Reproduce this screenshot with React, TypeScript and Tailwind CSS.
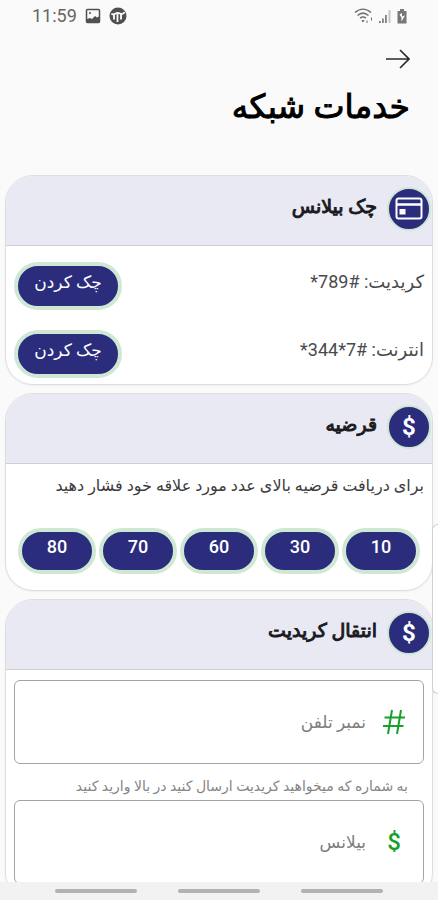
import type { ReactNode } from "react";

function Card({ title, icon, children }: { title: string; icon: ReactNode; children: ReactNode }) {
  return (
    <section className="overflow-hidden rounded-[28px] border border-[#dededf] bg-white shadow-xs">
      <header className="flex h-[70px] items-start gap-[10px] border-b border-[#cfcfd6] bg-[#e8e9f2] px-px pt-[11px]">
        <span className="flex size-11 shrink-0 items-center justify-center rounded-full border-2 border-[#cde6d3] bg-[#2b2c7c] text-2xl font-bold text-white">
          {icon}
        </span>
        <h2 className="pt-[6px] text-[19px] leading-7 font-medium text-[#1b1b1f] [-webkit-text-stroke:1px_currentColor]">
          {title}
        </h2>
      </header>
      {children}
    </section>
  );
}

function CardIcon() {
  return (
    <svg viewBox="0 0 28 24" className="h-6 w-7" fill="none" stroke="white" strokeWidth="2">
      <rect x="1.5" y="1.5" width="25" height="20" rx="2" />
      <path d="M2 7.500h24" strokeWidth="2.500" />
      <rect x="4.500" y="12" width="6" height="5.500" fill="white" stroke="none" />
    </svg>
  );
}

function CheckRow({ text }: { text: string }) {
  return (
    <div className="flex h-12 items-center justify-between">
      <p className="pb-2 text-lg leading-6 text-[#4a4a4c]">{text}</p>
      <button
        type="button"
        className="h-12 w-[108px] rounded-full border-4 border-[#cfe8d4] bg-[#2b2c7c] pb-2 text-[17px] leading-6 font-medium text-white"
      >
        چک کردن
      </button>
    </div>
  );
}

function Field({ id, label, icon }: { id: string; label: string; icon: ReactNode }) {
  return (
    <div className="flex h-[84px] items-center gap-4 rounded-md border border-[#a3a3a3] px-[17px] pb-px">
      <label htmlFor={id} className="flex w-6 shrink-0 justify-center text-2xl font-medium text-[#17a02b]">
        {icon}
      </label>
      <input
        id={id}
        type="text"
        aria-label={label}
        placeholder={label}
        className="h-10 min-w-0 flex-1 bg-transparent text-[17px] text-[#444444] outline-none placeholder:text-[#7d7d7d]"
      />
    </div>
  );
}

const amounts = [10, 30, 60, 70, 80];

export default function App() {
  return (
    <div
      dir="rtl"
      className="relative flex h-screen flex-col overflow-hidden bg-[#fafafa] font-[Roboto,'DejaVu_Sans',sans-serif]"
    >
      <div dir="ltr" className="flex h-8 shrink-0 items-center justify-between pr-[30px] pl-8 text-[#666666]">
        <div className="flex items-center gap-2">
          <span className="text-lg leading-6">11:59</span>
          <svg viewBox="0 0 16 16" className="size-4">
            <rect x="1.5" y="1.5" width="13" height="13" rx="1" fill="none" stroke="#505050" strokeWidth="1.5" />
            <path d="M2 14v-3l3-1 2 1 3-3 2 1.500 2-1V14z" fill="#505050" />
            <circle cx="5" cy="5" r="1" fill="#505050" />
          </svg>
          <svg viewBox="0 0 18 18" className="size-[18px]">
            <circle cx="9" cy="9" r="8.5" fill="#505050" />
            <path
              d="M2.500 6.500c1 1.500 2.500 1 4 0M6.500 6.500c1.500-1 3.500-.5 4.500 0s3.500 1 4.500-1.500M5 8v4.500M8.500 7v8M12 7.500v5"
              fill="none"
              stroke="white"
              strokeWidth="1.800"
            />
          </svg>
        </div>
        <div className="flex items-center gap-1">
          <svg viewBox="0 0 20 16" className="h-4 w-5" fill="none" stroke="#707070" strokeWidth="1.500">
            <path d="M1 4.500c5-4.500 11-4.500 16 0M3.500 7.500c3.500-3 7.500-3 11 0M6 10.200c2-1.500 4-1.500 6 0" />
            <path d="M8 12.500h2l-1 1.500zM13 12.500v2.500M17.500 9.500v3" strokeWidth="1" />
          </svg>
          <svg viewBox="0 0 14 16" className="h-4 w-3.5" fill="#808080">
            <path d="M1 13h1.800v2H1zM4 10.500h1.800V15H4zM7 7h1.800v8H7z" />
            <path d="M10.500 2h2v13h-2z" fill="#c8c8c8" />
          </svg>
          <svg viewBox="0 0 12 16" className="h-4 w-3">
            <path d="M4 1h4v2h2.500v12.500h-9V3H4z" fill="#777777" />
            <path d="M3.500 6.500 6 5v3.500l3-1-3.500 6V9.500z" fill="white" />
          </svg>
        </div>
      </div>

      <header className="flex shrink-0 flex-col items-start px-7 pt-[11px]">
        <button type="button" aria-label="بازگشت" className="flex h-8 w-6 items-center justify-center">
          <svg viewBox="0 0 24 20" className="h-5 w-6" fill="none" stroke="#2a2a2a" strokeWidth="1.600">
            <path d="M0 10h23M14 1l9 9-9 9" />
          </svg>
        </button>
        <h1 className="pt-3 text-[33px] leading-10 font-medium text-black [-webkit-text-stroke:1px_currentColor]">
          خدمات شبکه
        </h1>
      </header>

      <main className="mt-12 flex min-h-0 flex-1 flex-col gap-2 overflow-hidden px-[5px] *:shrink-0">
        <Card title="چک بیلانس" icon={<CardIcon />}>
          <div className="flex flex-col gap-5 px-2 pt-4 pb-[6px]">
            <CheckRow text="کریدیت: #789*" />
            <CheckRow text="انترنت: #7*344*" />
          </div>
        </Card>

        <Card title="قرضیه" icon="$">
          <div className="px-2 pt-[10px] pb-4">
            <p className="text-base leading-6 text-[#3c3c3e]">برای دریافت قرضیه بالای عدد مورد علاقه خود فشار دهید</p>
            <div className="mt-[30px] flex gap-[3px] px-1">
              {amounts.map((amount) => (
                <button
                  key={amount}
                  type="button"
                  className="h-[46px] flex-1 rounded-full border-4 border-[#cfe8d4] bg-[#2b2c7c] pb-2 text-lg leading-6 font-medium text-white"
                >
                  {amount}
                </button>
              ))}
            </div>
          </div>
        </Card>

        <Card title="انتقال کریدیت" icon="$">
          <form className="px-2 pt-[10px] pb-4">
            <Field
              id="phone"
              label="نمبر تلفن"
              icon={
                <svg viewBox="0 0 24 26" className="h-[26px] w-6" fill="none" stroke="#17a02b" strokeWidth="2">
                  <path d="M10 1 6 25M19 1l-4 24M2.500 8.500H23M1 17h20.500" />
                </svg>
              }
            />
            <p className="px-4 pt-[10px] pb-[2px] text-sm leading-6 text-[#858585]">
              به شماره که میخواهید کریدیت ارسال کنید در بالا وارید کنید
            </p>
            <Field id="balance" label="بیلانس" icon="$" />
          </form>
        </Card>
      </main>

      <nav className="flex h-[18px] shrink-0 items-center justify-center gap-[41px] bg-[#f2f2f2]">
        <button type="button" aria-label="برنامه‌های اخیر" className="h-1 w-[82px] rounded-full bg-[#b2b2b2]" />
        <button type="button" aria-label="خانه" className="h-1 w-[82px] rounded-full bg-[#b2b2b2]" />
        <button type="button" aria-label="برگشت" className="h-1 w-[82px] rounded-full bg-[#b2b2b2]" />
      </nav>

      <div className="absolute top-[524px] right-0 h-[170px] w-1.5 rounded-l-md border border-r-0 border-[#d0d0d0] bg-white" />
    </div>
  );
}
